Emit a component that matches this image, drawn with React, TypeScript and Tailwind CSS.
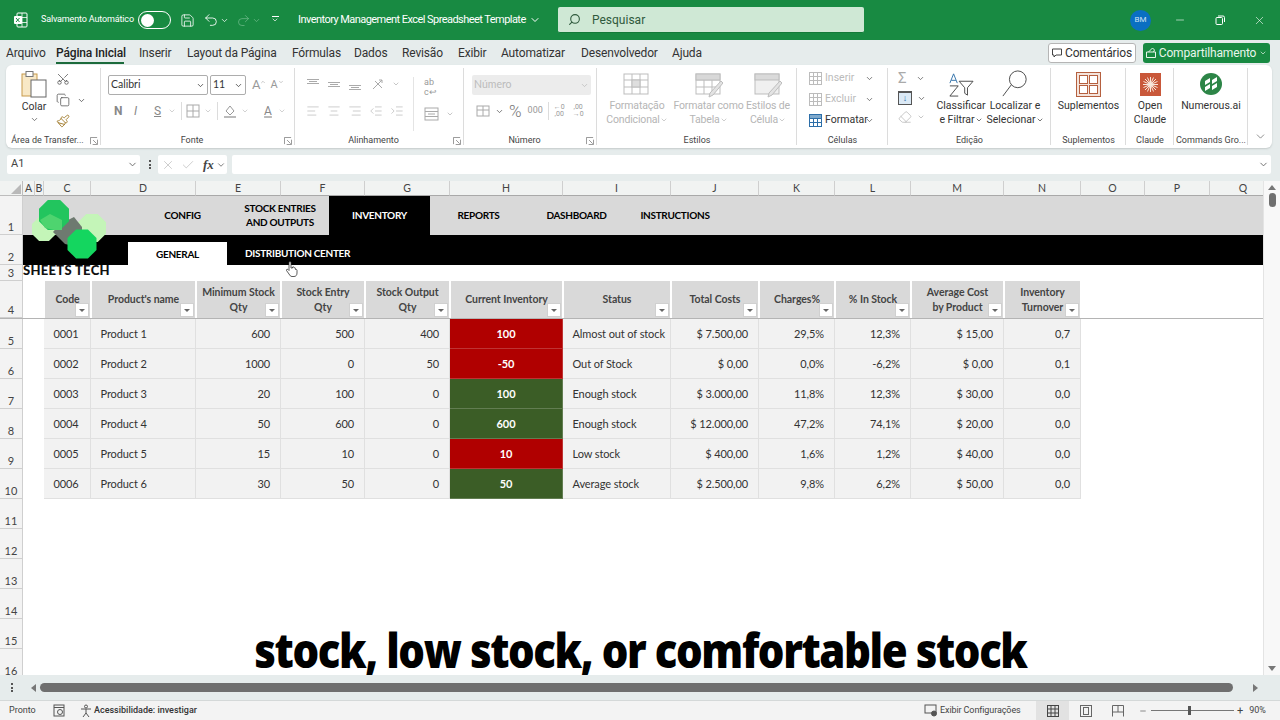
import {
  AlignCenter,
  AlignLeft,
  AlignRight,
  Check,
  ChevronDown,
  ChevronUp,
  Copy,
  Eraser,
  IndentDecrease,
  IndentIncrease,
  Minus,
  Paintbrush,
  Redo2,
  Save,
  Scissors,
  Search,
  Undo2,
  X,
} from 'lucide-react';
import type { ReactNode } from 'react';

const ui = "font-['Roboto',sans-serif]";
const calibri = "font-['Lato',sans-serif]";

const sheetCols = [
  { name: 'A', w: 'w-[12px]' },
  { name: 'B', w: 'w-[9px]' },
  { name: 'C', w: 'w-[47px]' },
  { name: 'D', w: 'w-[105px]' },
  { name: 'E', w: 'w-[85px]' },
  { name: 'F', w: 'w-[84px]' },
  { name: 'G', w: 'w-[85px]' },
  { name: 'H', w: 'w-[113px]' },
  { name: 'I', w: 'w-[108px]' },
  { name: 'J', w: 'w-[88px]' },
  { name: 'K', w: 'w-[76px]' },
  { name: 'L', w: 'w-[76px]' },
  { name: 'M', w: 'w-[93px]' },
  { name: 'N', w: 'w-[77px]' },
  { name: 'O', w: 'w-[64px]' },
  { name: 'P', w: 'w-[65px]' },
  { name: 'Q', w: 'w-[67px]' },
];

const tableHead = [
  { w: 'w-[47px]', lines: ['Code'] },
  { w: 'w-[105px]', lines: ["Product's name"] },
  { w: 'w-[85px]', lines: ['Minimum Stock', 'Qty'] },
  { w: 'w-[84px]', lines: ['Stock Entry', 'Qty'] },
  { w: 'w-[85px]', lines: ['Stock Output', 'Qty'] },
  { w: 'w-[113px]', lines: ['Current Inventory'] },
  { w: 'w-[108px]', lines: ['Status'] },
  { w: 'w-[88px]', lines: ['Total Costs'] },
  { w: 'w-[76px]', lines: ['Charges%'] },
  { w: 'w-[76px]', lines: ['% In Stock'] },
  { w: 'w-[93px]', lines: ['Average Cost', 'by Product'] },
  { w: 'w-[77px]', lines: ['Inventory', 'Turnover'] },
];

const rows = [
  { row: 5, code: '0001', name: 'Product 1', min: '600', entry: '500', out: '400', cur: '100', tone: 'bg-[#b00000]', status: 'Almost out of stock', cost: '$ 7.500,00', charges: '29,5%', pct: '12,3%', avg: '$ 15,00', turn: '0,7' },
  { row: 6, code: '0002', name: 'Product 2', min: '1000', entry: '0', out: '50', cur: '-50', tone: 'bg-[#b00000]', status: 'Out of Stock', cost: '$ 0,00', charges: '0,0%', pct: '-6,2%', avg: '$ 0,00', turn: '0,1' },
  { row: 7, code: '0003', name: 'Product 3', min: '20', entry: '100', out: '0', cur: '100', tone: 'bg-[#3b5d26]', status: 'Enough stock', cost: '$ 3.000,00', charges: '11,8%', pct: '12,3%', avg: '$ 30,00', turn: '0,0' },
  { row: 8, code: '0004', name: 'Product 4', min: '50', entry: '600', out: '0', cur: '600', tone: 'bg-[#3b5d26]', status: 'Enough stock', cost: '$ 12.000,00', charges: '47,2%', pct: '74,1%', avg: '$ 20,00', turn: '0,0' },
  { row: 9, code: '0005', name: 'Product 5', min: '15', entry: '10', out: '0', cur: '10', tone: 'bg-[#b00000]', status: 'Low stock', cost: '$ 400,00', charges: '1,6%', pct: '1,2%', avg: '$ 40,00', turn: '0,0' },
  { row: 10, code: '0006', name: 'Product 6', min: '30', entry: '50', out: '0', cur: '50', tone: 'bg-[#3b5d26]', status: 'Average stock', cost: '$ 2.500,00', charges: '9,8%', pct: '6,2%', avg: '$ 50,00', turn: '0,0' },
];

function RowHead({ n }: { n: number }) {
  return (
    <div className={`flex w-[23px] shrink-0 items-end justify-center border-r border-b border-[#cfcfcf] bg-[#f3f3f3] text-[11px] leading-[15px] text-[#444] ${calibri}`}>
      {n}
    </div>
  );
}

function Cell({ w, children, right, strong }: { w: string; children: ReactNode; right?: boolean; strong?: string }) {
  const base = 'flex h-full shrink-0 items-center border-r border-b pt-[1px] text-[11px] tracking-[-0.1px] ';
  const align = strong
    ? 'justify-center font-bold text-white border-white/20 ' + strong
    : right
      ? 'justify-end pr-[10px] bg-[#f2f2f2] border-[#e0e0e0] text-[#333]'
      : 'pl-[9.500px] bg-[#f2f2f2] border-[#e0e0e0] text-[#333]';
  return <div className={`${base} ${w} ${align}`}>{children}</div>;
}

function FilterBtn() {
  return (
    <div className="absolute right-[1px] bottom-[1px] flex h-[14px] w-[14px] items-center justify-center border border-[#d0d0d0] bg-white">
      <div className="h-0 w-0 border-x-[3px] border-t-[3px] border-x-transparent border-t-[#666]" />
    </div>
  );
}

function Group({ w, label, children, expand, last }: { w: string; label: string; children: ReactNode; expand?: boolean; last?: boolean }) {
  return (
    <div className={`relative flex shrink-0 flex-col ${w}`}>
      <div className="relative h-[66px] w-full">{children}</div>
      <div className={`mt-[2px] text-center text-[9px] leading-[14px] whitespace-nowrap text-[#444] ${expand ? 'pr-[12px]' : ''}`}>{label}</div>
      {expand && (
        <svg className="absolute right-[3px] bottom-[3px]" width="8" height="8" viewBox="0 0 9 9" fill="none" stroke="#8a8a8a">
          <path d="M.5 8V.5H8M8.500 3v5.500H3M3.500 3.500l4 4" />
        </svg>
      )}
      {!last && <div className="absolute top-[3px] right-0 bottom-[3px] w-px bg-[#dcdcdc]" />}
    </div>
  );
}

function Octagon({ cx, cy, r, fill }: { cx: number; cy: number; r: number; fill: string }) {
  const a = r * 0.41;
  return <polygon fill={fill} points={`${cx - a},${cy - r} ${cx + a},${cy - r} ${cx + r},${cy - a} ${cx + r},${cy + a} ${cx + a},${cy + r} ${cx - a},${cy + r} ${cx - r},${cy + a} ${cx - r},${cy - a}`} />;
}

function Logo() {
  return (
    <svg className="absolute top-[19px] left-[32px]" width="74" height="59" viewBox="0 0 74 59">
      <Octagon cx={12} cy={29} r={12} fill="#c4f5b8" />
      <Octagon cx={60} cy={28} r={14} fill="#c4f5b8" />
      <polygon points="28,24 42,17 50,27 50,40 42,46 33,44 21,32" fill="#6e7a70" />
      <Octagon cx={22} cy={15} r={15} fill="#22c55e" />
      <polygon points="8,20 18,14 30,20 30,30 22,30 13,28" fill="#4ed46f" />
      <Octagon cx={50} cy={44} r={14.500} fill="#14d65f" />
    </svg>
  );
}

function VAlign({ pos }: { pos: 'top' | 'mid' | 'bottom' }) {
  const y = pos === 'top' ? 2 : pos === 'mid' ? 5 : 8;
  return (
    <svg width="14" height="14" viewBox="0 0 14 14" fill="none" stroke="#aaa">
      <path d={`M1 ${y}.5h12M3 ${y + 2}.5h8M1 ${y + 4}.5h12`} />
    </svg>
  );
}

function GrayIcon({ kind }: { kind: 'cond' | 'table' | 'cell' }) {
  return (
    <svg width="28" height="25" viewBox="0 2 28 25" fill="none" stroke="#bdbdbd" strokeWidth="1">
      <rect x="1" y="3" width="24" height="20" fill={kind === 'cell' ? '#f0f0f0' : 'white'} />
      {kind === 'cell' ? <rect x="1" y="3" width="24" height="6" fill="#dadada" /> : <path d="M1 9h24M1 16h24M9 3v20M17 3v20" />}
      {kind === 'table' && <rect x="1" y="3" width="24" height="6" fill="#d8d8d8" />}
      {kind !== 'cond' && <path d="M26 10L15 22l-1 4 4-2L28 12z" fill="#e3e3e3" />}
      {kind === 'cond' && <rect x="9" y="9" width="8" height="7" fill="#dedede" />}
    </svg>
  );
}

function CellsIcon({ d }: { d: 'ins' | 'del' | 'fmt' }) {
  const color = d === 'fmt' ? '#2c6ea8' : '#bcbcbc';
  return (
    <svg width="15" height="15" viewBox="0 0 15 15" fill="none" stroke={color}>
      <rect x="1.500" y="1.500" width="12" height="12" />
      <path d="M1.500 5.500h12M1.500 9.500h12M5.500 1.500v12M9.500 1.500v12" />
      {d === 'fmt' && <path d="M1.500 1.500h12v4h-12z" fill="#7fa9cc" />}
    </svg>
  );
}

function App() {
  return (
    <div className={`flex h-[720px] w-[1280px] flex-col overflow-hidden bg-[#e6ecec] ${ui}`}>
      {/* title bar */}
      <div className="flex h-[40px] shrink-0 items-center bg-[#188a42] pl-[14px] text-white">
        <svg width="14" height="16" viewBox="0 0 14 16" fill="none" className="mr-[13px] shrink-0">
          <rect x="3" y="1" width="10" height="14" rx="1" stroke="white" />
          <path d="M8 1v14M3 5.500h10M3 10.500h10" stroke="white" strokeWidth=".8" />
          <rect x="0" y="4" width="8" height="8" rx="1" fill="white" />
          <path d="M2 6l3.500 4M5.500 6L2 10" stroke="#188a42" />
        </svg>
        <span className="w-[97px] shrink-0 text-[9px] tracking-[-0.15px] whitespace-nowrap">Salvamento Automático</span>
        <div className="flex h-[18px] w-[33px] shrink-0 items-center rounded-full border border-white pl-[2px]">
          <div className="h-[13px] w-[13px] rounded-full bg-white" />
        </div>
        <Save size={15} strokeWidth={1.3} className="ml-[9px] shrink-0" />
        <Undo2 size={16} strokeWidth={1.3} className="ml-[8px] shrink-0" />
        <ChevronDown size={9} className="ml-[1px] shrink-0" />
        <Redo2 size={15} strokeWidth={1.2} className="ml-[7px] shrink-0 text-[#6db98a]" />
        <ChevronDown size={9} className="ml-[1px] shrink-0 text-[#6db98a]" />
        <div className="ml-[10px] flex w-[8px] shrink-0 flex-col items-center gap-[2px]">
          <div className="h-px w-[7px] bg-white" />
          <ChevronDown size={8} className="-mt-[3px]" />
        </div>
        <span className="ml-[19px] w-[227px] shrink-0 text-[11px] tracking-[-0.55px] whitespace-nowrap">Inventory Management Excel Spreadsheet Template</span>
        <ChevronDown size={12} className="ml-[4px] shrink-0" />
        <div className="ml-[17px] flex h-[26px] w-[306px] shrink-0 items-center rounded-[2px] border-b border-[#137a38] bg-[#cfe8d5] pl-[10px] text-[#2f5a3d]">
          <Search size={13} className="-scale-x-100" />
          <span className="ml-[11px] text-[12px]">Pesquisar</span>
        </div>
        <div className="ml-[266px] flex h-[21px] w-[21px] shrink-0 items-center justify-center rounded-full bg-[#0a6fc2] text-[8px] text-[#cfe2f3]">BM</div>
        <Minus size={12} strokeWidth={1.2} className="ml-[23px] shrink-0" />
        <svg width="10" height="10" viewBox="0 0 10 10" fill="none" stroke="white" className="ml-[29px] shrink-0">
          <rect x="1" y="2.500" width="6.500" height="7" rx="1" />
          <path d="M3 1h5a1.500 1.500 0 0 1 1.500 1.500V7" />
        </svg>
        <X size={13} strokeWidth={1.1} className="ml-[28px] shrink-0" />
      </div>

      {/* menu */}
      <div className="flex h-[25px] shrink-0 items-center pl-[6px] text-[12px] tracking-[-0.15px] text-[#333]">
        <div className="flex w-[1042px] items-center">
          <span className="w-[50px]">Arquivo</span>
          <span className="relative w-[83px] font-medium text-[#222]">
            Página Inicial
            <div className="absolute top-[18px] left-0 h-[2px] w-[68px] bg-[#1c6b3c]" />
          </span>
          <span className="w-[48px]">Inserir</span>
          <span className="w-[105px]">Layout da Página</span>
          <span className="w-[62px]">Fórmulas</span>
          <span className="w-[48px]">Dados</span>
          <span className="w-[56px]">Revisão</span>
          <span className="w-[43px]">Exibir</span>
          <span className="w-[80px]">Automatizar</span>
          <span className="w-[91px]">Desenvolvedor</span>
          <span>Ajuda</span>
        </div>
        <div className="flex h-[20px] w-[88px] items-center justify-center gap-[3px] rounded-[3px] border border-[#b5b5b5] bg-white">
          <svg width="10" height="10" viewBox="0 0 10 10" fill="none" stroke="#444"><path d="M.5 1h9v6H4L2 9V7H.5z" /></svg>
          <span className="text-[12px]">Comentários</span>
        </div>
        <div className="ml-[7px] flex h-[20px] w-[127px] items-center justify-center gap-[3px] rounded-[3px] bg-[#188a42] text-[#e8f6ec]">
          <svg width="10" height="11" viewBox="0 0 10 11" fill="none" stroke="#e8f6ec"><path d="M.5 5h9v5.500h-9zM2.500 5l4-4 2 2-1 2" /></svg>
          <span className="text-[12px]">Compartilhamento</span>
          <ChevronDown size={8} />
        </div>
      </div>

      {/* ribbon */}
      <div className="mx-[6px] flex h-[83px] w-[1266px] shrink-0 rounded-[6px] bg-white shadow-[0_1px_2px_#c4caca]">
        <Group w="w-[95px]" label="Área de Transfer..." expand>
          <div className="flex h-full">
            <div className="ml-[14px] flex w-[28px] flex-col items-center pt-[6px]">
              <svg width="26" height="27" viewBox="0 0 26 27" fill="none">
                <rect x="1" y="3" width="15" height="22" fill="#f8e8c6" stroke="#c89a4a" />
                <rect x="5" y="0.500" width="7" height="5" fill="white" stroke="#777" />
                <rect x="10" y="9" width="15" height="17" fill="white" stroke="#666" />
              </svg>
              <span className="mt-[2px] text-[10.500px] leading-[14px] text-[#333]">Colar</span>
              <ChevronDown size={9} className="mt-[1px] text-[#555]" />
            </div>
            <div className="ml-[8px] flex flex-col gap-[7px] pt-[7px] text-[#444]">
              <Scissors size={14} strokeWidth={1.2} className="-rotate-90" />
              <div className="flex items-center gap-[7px]">
                <Copy size={14} strokeWidth={1.2} />
                <ChevronDown size={9} />
              </div>
              <Paintbrush size={14} strokeWidth={1.6} className="text-[#a07a2a]" />
            </div>
          </div>
        </Group>

        <Group w="w-[194px]" label="Fonte" expand>
          <div className="flex flex-col pt-[10px] pl-[7px]">
            <div className="flex items-center">
              <div className={`flex h-[20px] w-[100px] items-center justify-between rounded-[2px] border border-[#adadad] px-[2px] text-[10.500px] text-[#333] ${calibri}`}>
                Calibri
                <ChevronDown size={9} strokeWidth={2} />
              </div>
              <div className={`ml-[2px] flex h-[20px] w-[36px] items-center justify-between rounded-[2px] border border-[#adadad] px-[2px] text-[10.500px] text-[#333] ${calibri}`}>
                11
                <ChevronDown size={9} strokeWidth={2} />
              </div>
              <span className="ml-[6px] text-[13px] text-[#999]">A</span>
              <ChevronUp size={6} className="mb-[6px] text-[#999]" />
              <span className="ml-[4px] text-[11px] text-[#999]">A</span>
              <ChevronDown size={6} className="mb-[6px] text-[#999]" />
            </div>
            <div className="mt-[6px] flex h-[20px] items-center pl-[6px] text-[12px] text-[#888]">
              <span className="w-[20px] font-bold">N</span>
              <span className="w-[20px] italic">I</span>
              <span className="w-[14px] underline">S</span>
              <ChevronDown size={8} className="text-[#bbb]" />
              <div className="ml-[5px] h-[18px] w-px bg-[#dcdcdc]" />
              <svg width="14" height="14" viewBox="0 0 14 14" fill="none" stroke="#aaa" className="ml-[4px]"><rect x="1" y="1" width="12" height="12" /><path d="M1 7h12M7 1v12" /></svg>
              <ChevronDown size={8} className="ml-[4px] text-[#bbb]" />
              <div className="ml-[5px] h-[18px] w-px bg-[#dcdcdc]" />
              <svg width="14" height="15" viewBox="0 0 14 15" fill="none" className="ml-[5px]"><path d="M3 7l4-5 4 5-4 4z" stroke="#999" /><rect x="1" y="12" width="12" height="2" fill="#bbb" /></svg>
              <ChevronDown size={8} className="ml-[4px] text-[#bbb]" />
              <div className="ml-[13px] flex w-[12px] flex-col items-center text-[12px] leading-[12px] underline decoration-[#bbb] decoration-2">A</div>
              <ChevronDown size={8} className="ml-[4px] text-[#bbb]" />
            </div>
          </div>
        </Group>

        <Group w="w-[169px]" label="Alinhamento" expand>
          <div className="flex h-full pt-[12px] pl-[11px] text-[#aaa]">
            <div className="flex w-[107px] flex-col gap-[13px]">
              <div className="flex items-center gap-[7px]">
                <VAlign pos="top" />
                <VAlign pos="mid" />
                <VAlign pos="bottom" />
                <svg width="14" height="14" viewBox="0 0 14 14" fill="none" stroke="#aaa" className="ml-[2px]"><path d="M2 12L11 3M8 3h3v3M4 4l7 7" /></svg>
                <ChevronDown size={8} />
              </div>
              <div className="flex items-center gap-[7px]">
                <AlignLeft size={14} strokeWidth={1} />
                <AlignCenter size={14} strokeWidth={1} />
                <AlignRight size={14} strokeWidth={1} />
                <IndentDecrease size={14} strokeWidth={1} />
                <IndentIncrease size={14} strokeWidth={1} />
              </div>
            </div>
            <div className="flex w-[40px] flex-col gap-[9px] border-l border-[#e4e4e4] pl-[10px]">
              <span className="text-[9px] leading-[10px] text-[#999]">ab<br />c↩</span>
              <div className="mt-[1px] flex items-center gap-[7px]">
                <svg width="15" height="14" viewBox="0 0 15 14" fill="none" stroke="#aaa" className="shrink-0"><rect x="1" y="1" width="13" height="12" /><path d="M1 4.500h13M1 9.500h13M4 7h7" /></svg>
                <ChevronDown size={8} className="shrink-0" />
              </div>
            </div>
          </div>
        </Group>

        <Group w="w-[133px]" label="Número" expand>
          <div className="flex flex-col pt-[10px] pl-[8px] text-[#aaa]">
            <div className={`flex h-[20px] w-[119px] items-center justify-between rounded-[2px] bg-[#ececec] px-[2px] text-[10.500px] text-[#bbb] ${calibri}`}>
              Número
              <ChevronDown size={9} />
            </div>
            <div className="mt-[6px] flex h-[20px] items-center pl-[4px]">
              <svg width="14" height="14" viewBox="0 0 14 14" fill="none" stroke="#aaa"><rect x="1" y="2" width="12" height="10" /><path d="M1 6h12M7 2v10" /></svg>
              <ChevronDown size={9} className="ml-[5px] text-[#555]" />
              <span className="ml-[5px] text-[17px] leading-none font-light text-[#777]">%</span>
              <span className="ml-[6px] text-[9px] text-[#999]">000</span>
              <div className="ml-[5px] h-[18px] w-px bg-[#dcdcdc]" />
              <span className="ml-[5px] text-center text-[7px] leading-[7px] text-[#999]">←0<br />,00</span>
              <span className="ml-[8px] text-center text-[7px] leading-[7px] text-[#999]">,00<br />→0</span>
            </div>
          </div>
        </Group>

        <Group w="w-[200px]" label="Estilos">
          <div className="flex text-center text-[10.500px] leading-[14px] tracking-[-0.15px] text-[#b5b5b5]">
            <div className="flex w-[76px] flex-col items-center pt-[8px] pl-[4px]">
              <GrayIcon kind="cond" />
              <span className="mt-[1px] whitespace-nowrap">Formatação</span>
              <span className="flex items-center whitespace-nowrap">Condicional<ChevronDown size={8} /></span>
            </div>
            <div className="flex w-[71px] flex-col items-center pt-[8px]">
              <GrayIcon kind="table" />
              <span className="mt-[1px] whitespace-nowrap">Formatar como</span>
              <span className="flex items-center whitespace-nowrap">Tabela<ChevronDown size={8} /></span>
            </div>
            <div className="flex w-[48px] flex-col items-center pt-[8px]">
              <GrayIcon kind="cell" />
              <span className="mt-[1px] whitespace-nowrap">Estilos de</span>
              <span className="flex items-center whitespace-nowrap">Célula<ChevronDown size={8} /></span>
            </div>
          </div>
        </Group>

        <Group w="w-[91px]" label="Células">
          <div className="flex flex-col gap-[5px] pt-[5px] pl-[11px] text-[10.500px] leading-[16px] text-[#bbb]">
            <div className="flex items-center gap-[2px]"><CellsIcon d="ins" /><span className="w-[38px]">Inserir</span><ChevronDown size={9} className="text-[#555]" /></div>
            <div className="flex items-center gap-[2px]"><CellsIcon d="del" /><span className="w-[38px]">Excluir</span><ChevronDown size={9} className="text-[#555]" /></div>
            <div className="flex items-center gap-[2px] text-[#333]"><CellsIcon d="fmt" /><span className="w-[38px] whitespace-nowrap">Formatar</span><ChevronDown size={9} className="text-[#555]" /></div>
          </div>
        </Group>

        <Group w="w-[163px]" label="Edição">
          <div className="flex h-full text-[10.500px] leading-[14px] text-[#333]">
            <div className="flex w-[44px] flex-col gap-[5px] pt-[5px] pl-[10px] text-[#aaa]">
              <div className="flex items-center gap-[9px]"><span className="w-[9px] text-[15px] leading-[16px]">Σ</span><ChevronDown size={9} className="text-[#555]" /></div>
              <div className="flex items-center gap-[5px]">
                <div className="flex h-[14px] w-[14px] items-center justify-center border border-t-2 border-[#555] bg-[#dbe9f5] text-[9px] leading-none text-[#2c6ea8]">↓</div>
                <ChevronDown size={9} className="text-[#555]" />
              </div>
              <div className="flex items-center gap-[5px]"><Eraser size={14} strokeWidth={1.1} /><ChevronDown size={8} /></div>
            </div>
            <div className="flex w-[58px] flex-col items-center pt-[7px]">
              <svg width="26" height="25" viewBox="0 0 28 27" fill="none" stroke="#444">
                <path d="M12 10h15l-6 7v8l-3-2v-6z" />
                <path d="M2 15h9L2 26h9" />
                <path d="M2 12L6 2l4 10M3.500 9h5" stroke="#2c6ea8" />
              </svg>
              <span className="mt-[2px] whitespace-nowrap">Classificar</span>
              <span className="flex items-center whitespace-nowrap">e Filtrar<ChevronDown size={8} /></span>
            </div>
            <div className="flex w-[50px] flex-col items-center pt-[5px]">
              <svg width="28" height="27" viewBox="0 0 30 29" fill="none" stroke="#444">
                <circle cx="18" cy="10" r="9" />
                <path d="M11 16L2 28" />
              </svg>
              <span className="mt-[2px] whitespace-nowrap">Localizar e</span>
              <span className="flex items-center whitespace-nowrap">Selecionar<ChevronDown size={8} /></span>
            </div>
          </div>
        </Group>

        <Group w="w-[75px]" label="Suplementos">
          <div className="flex flex-col items-center pt-[7px] text-[10.500px] leading-[14px] text-[#333]">
            <svg width="25" height="25" viewBox="0 0 25 25" fill="#f4e4dc" stroke="#b5603f">
              <rect x="0.500" y="0.500" width="24" height="24" />
              <rect x="3.500" y="3.500" width="8" height="8" fill="white" />
              <rect x="13.500" y="3.500" width="8" height="8" fill="white" />
              <rect x="3.500" y="13.500" width="8" height="8" fill="white" />
              <rect x="13.500" y="13.500" width="8" height="8" fill="white" />
            </svg>
            <span className="mt-[2px]">Suplementos</span>
          </div>
        </Group>

        <Group w="w-[48px]" label="Claude">
          <div className="flex flex-col items-center pt-[8px] text-center text-[10.500px] leading-[14px] text-[#333]">
            <svg width="21" height="23" viewBox="0 0 21 23">
              <rect width="21" height="23" fill="#c9583a" />
              <path d="M10.500 4v15M3 11.500h15M5 6l11 11M16 6L5 17M7.500 4.500l6 14M13.500 4.500l-6 14M3.500 8.500l14 6M17.500 8.500l-14 6" stroke="#f7e7dc" strokeWidth="1" />
            </svg>
            <span className="mt-[3px]">Open</span>
            <span>Claude</span>
          </div>
        </Group>

        <Group w="w-[74px]" label="Commands Gro...">
          <div className="flex flex-col items-center pt-[8px] text-[10.500px] leading-[14px] text-[#333]">
            <svg width="22" height="22" viewBox="0 0 22 22">
              <circle cx="11" cy="11" r="11" fill="#2d8547" />
              <path d="M5 8l5-3v4l-5 3zM5 14l5-3v4l-5 3zM12 7l5-3v4l-5 3zM12 13l5-3v4l-5 3z" fill="white" />
            </svg>
            <span className="mt-[4px] whitespace-nowrap">Numerous.ai</span>
          </div>
        </Group>

        <div className="flex flex-1 items-end justify-center pb-[5px] text-[#555]">
          <ChevronDown size={13} strokeWidth={1.2} />
        </div>
      </div>

      {/* formula bar */}
      <div className="mt-[7px] ml-[7px] flex h-[19px] shrink-0 items-center text-[#444]">
        <div className="flex h-full w-[133px] items-center justify-between rounded-[2px] bg-white pr-[2px] pl-[4px] text-[11px]">
          A1
          <ChevronDown size={11} className="text-[#666]" />
        </div>
        <div className="ml-[9px] flex flex-col gap-[1.500px]">
          <div className="h-[2px] w-[2px] bg-[#555]" />
          <div className="h-[2px] w-[2px] bg-[#555]" />
          <div className="h-[2px] w-[2px] bg-[#555]" />
        </div>
        <div className="ml-[7px] flex h-full w-[69px] items-center rounded-[2px] bg-white pl-[3px]">
          <X size={14} strokeWidth={1} className="text-[#aaa]" />
          <Check size={14} strokeWidth={1} className="ml-[6px] text-[#aaa]" />
          <span className="ml-[8px] font-['Liberation_Serif',serif] text-[13px] font-bold italic">fx</span>
          <ChevronDown size={10} className="ml-[2px] text-[#666]" />
        </div>
        <div className="ml-[5px] flex h-full w-[1039px] items-center justify-end rounded-[2px] bg-white pr-[2px]">
          <ChevronDown size={11} className="text-[#666]" />
        </div>
      </div>

      {/* sheet + vertical scrollbar */}
      <div className="mt-[7px] flex h-[494px] shrink-0">
        <div className={`relative w-[1263px] overflow-hidden bg-white ${calibri}`}>
          <div className="flex h-[15px] bg-[#f1f3f2]">
            <div className="flex w-[23px] shrink-0 items-end justify-end border-r border-b border-[#bdbdbd] pr-[1px] pb-[1px]">
              <div className="h-0 w-0 border-b-[10px] border-l-[10px] border-b-[#b9b9b9] border-l-transparent" />
            </div>
            {sheetCols.map((c) => (
              <div key={c.name} className={`${c.w} shrink-0 border-r border-b border-r-[#cfcfcf] border-b-[#a9a9a9] text-center text-[10.500px] leading-[14px] text-[#444]`}>
                {c.name}
              </div>
            ))}
          </div>

          <div className="flex h-[39px]">
            <RowHead n={1} />
            <div className="flex flex-1 items-center bg-[#d9d9d9] pl-[111px] text-center text-[10px] leading-[13.500px] font-bold tracking-[-0.3px] text-black">
              <div className="w-[97px]">CONFIG</div>
              <div className="w-[98px]">STOCK ENTRIES<br />AND OUTPUTS</div>
              <div className="flex h-full w-[101px] items-center justify-center bg-black text-white">INVENTORY</div>
              <div className="w-[97px]">REPORTS</div>
              <div className="w-[99px]">DASHBOARD</div>
              <div className="w-[98px]">INSTRUCTIONS</div>
            </div>
          </div>

          <div className="flex h-[30px]">
            <RowHead n={2} />
            <div className="flex flex-1 items-end bg-black pl-[105px] text-[10px] font-bold tracking-[-0.3px]">
              <div className="flex h-[23px] w-[99px] items-center justify-center bg-white pt-[1px] text-black">GENERAL</div>
              <div className="ml-[18px] flex h-[23px] items-center text-white">DISTRIBUTION CENTER</div>
            </div>
          </div>

          <div className="flex h-[16px]">
            <RowHead n={3} />
            <div className="text-[13px] leading-[11px] font-black tracking-[0.3px] text-[#111]">SHEETS TECH</div>
          </div>

          <div className="flex h-[38px] border-b border-[#b4b4b4]">
            <RowHead n={4} />
            <div className="w-[21px] shrink-0" />
            {tableHead.map((h) => (
              <div key={h.lines[0]} className={`relative ${h.w} flex shrink-0 flex-col items-center justify-center border-x border-white bg-[#d9d9d9] pt-[1px] text-center text-[10.500px] leading-[15.500px] font-bold tracking-[-0.05px] text-[#444]`}>
                {h.lines.map((l) => (
                  <span key={l} className="whitespace-nowrap">{l}</span>
                ))}
                <FilterBtn />
              </div>
            ))}
          </div>

          {rows.map((r) => (
            <div key={r.row} className="flex h-[30px]">
              <RowHead n={r.row} />
              <div className="w-[21px] shrink-0" />
              <Cell w="w-[47px]">{r.code}</Cell>
              <Cell w="w-[105px]">{r.name}</Cell>
              <Cell w="w-[85px]" right>{r.min}</Cell>
              <Cell w="w-[84px]" right>{r.entry}</Cell>
              <Cell w="w-[85px]" right>{r.out}</Cell>
              <Cell w="w-[113px]" strong={r.tone}>{r.cur}</Cell>
              <Cell w="w-[108px]">{r.status}</Cell>
              <Cell w="w-[88px]" right>{r.cost}</Cell>
              <Cell w="w-[76px]" right>{r.charges}</Cell>
              <Cell w="w-[76px]" right>{r.pct}</Cell>
              <Cell w="w-[93px]" right>{r.avg}</Cell>
              <Cell w="w-[77px]" right>{r.turn}</Cell>
            </div>
          ))}

          {[11, 12, 13, 14, 15, 16].map((n) => (
            <div key={n} className="flex h-[30px]">
              <RowHead n={n} />
            </div>
          ))}

          <Logo />

          {/* hand cursor over the sheet */}
          <svg className="absolute top-[80px] left-[286px]" width="12" height="16" viewBox="0 0 12 16" fill="white" stroke="#333" strokeWidth=".8">
            <path d="M3 1.500c0-1 2-1 2 0V7h1.500V6c1-.5 1.500 0 1.500.5V7c1-.5 1.500 0 1.500.5v1c.7-.3 1.500 0 1.500.7V12c0 2-1 3.500-3 3.500H6c-1.500 0-2-1-3-2.500L.5 9.500C0 8.500 1 8 2 8.500l1 1z" />
          </svg>

          {/* video caption */}
          <div className="absolute top-[436px] right-0 left-0 flex justify-center pl-[17px]">
            <span className="origin-center scale-x-[0.893] font-['Open_Sans',sans-serif] text-[47px] leading-[66px] font-extrabold tracking-[-1.600px] whitespace-nowrap text-black">
              stock, low stock, or comfortable stock
            </span>
          </div>
        </div>

        <div className="flex w-[17px] flex-col items-center justify-between border-l border-[#e4e4e4] bg-[#f8f8f8] py-[4px]">
          <div className="flex flex-col items-center gap-[3px]">
            <div className="h-0 w-0 border-x-[4px] border-b-[5px] border-x-transparent border-b-[#777]" />
            <div className="h-[14px] w-[7px] rounded-full bg-[#6f6f6f]" />
          </div>
          <div className="h-0 w-0 border-x-[4px] border-t-[5px] border-x-transparent border-t-[#777]" />
        </div>
      </div>

      {/* horizontal scrollbar */}
      <div className="flex h-[26px] shrink-0 items-center border-b border-[#d4d8d8] pl-[11px]">
        <div className="flex flex-col gap-[1.500px]">
          <div className="h-[2px] w-[2px] bg-[#555]" />
          <div className="h-[2px] w-[2px] bg-[#555]" />
          <div className="h-[2px] w-[2px] bg-[#555]" />
        </div>
        <div className="ml-[18px] h-0 w-0 border-y-[4px] border-r-[5px] border-y-transparent border-r-[#777]" />
        <div className="ml-[4px] h-[9px] w-[1193px] rounded-full bg-[#6f6f6f]" />
        <div className="ml-[20px] h-0 w-0 border-y-[4px] border-l-[5px] border-y-transparent border-l-[#777]" />
      </div>

      {/* status bar */}
      <div className="flex h-[19px] shrink-0 items-center justify-between bg-[#f3f3f3] pl-[9px] text-[9px] text-[#444]">
        <div className="flex items-center">
          <span className="w-[44px]">Pronto</span>
          <svg width="12" height="13" viewBox="0 0 12 13" fill="none" stroke="#555"><rect x="1" y="1" width="10" height="11" /><path d="M1 3.500h10" /><circle cx="7" cy="8" r="2.500" /></svg>
          <svg width="14" height="14" viewBox="0 0 14 14" fill="none" stroke="#555" className="ml-[14px]"><circle cx="7" cy="2.500" r="1.500" /><path d="M2 5h10M7 5v4M7 9l-3 4M7 9l3 4" /></svg>
          <span className="ml-[1px] font-medium whitespace-nowrap text-[#333]">Acessibilidade: investigar</span>
        </div>
        <div className="flex h-full w-[356px] items-center">
          <svg width="14" height="13" viewBox="0 0 14 13" fill="none" stroke="#555"><rect x="1" y="1" width="11" height="8" /><circle cx="10" cy="9.500" r="2.500" fill="#555" /></svg>
          <span className="ml-[2px] w-[96px] tracking-[-0.1px] whitespace-nowrap">Exibir Configurações</span>
          <div className="flex h-full w-[33px] items-center justify-center bg-[#e2e2e2]">
            <svg width="12" height="12" viewBox="0 0 12 12" fill="none" stroke="#444"><rect x=".5" y=".5" width="11" height="11" /><path d="M.5 4h11M.5 8h11M4 .5v11M8 .5v11" /></svg>
          </div>
          <svg width="12" height="12" viewBox="0 0 12 12" fill="none" stroke="#666" className="ml-[11px]"><rect x=".5" y=".5" width="11" height="11" /><rect x="3.500" y="2.500" width="5" height="7" /></svg>
          <svg width="12" height="12" viewBox="0 0 12 12" fill="none" stroke="#666" className="ml-[20px]"><path d="M.5 11.500V.5h11v11M.5 7h11M6 .5V7" /></svg>
          <Minus size={8} className="ml-[15px] text-[#555]" />
          <div className="relative ml-[4px] h-px w-[83px] bg-[#777]">
            <div className="absolute -top-[4px] left-[37px] h-[9px] w-[3px] bg-[#555]" />
          </div>
          <span className="ml-[3px] text-[11px] leading-none">+</span>
          <span className="ml-[6px]">90%</span>
        </div>
      </div>
    </div>
  );
}

export default App;
